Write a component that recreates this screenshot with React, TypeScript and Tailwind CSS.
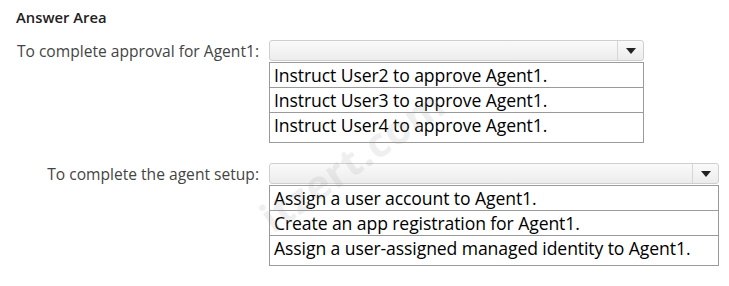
const approvalOptions = [
  'Instruct User2 to approve Agent1.',
  'Instruct User3 to approve Agent1.',
  'Instruct User4 to approve Agent1.',
];

const setupOptions = [
  'Assign a user account to Agent1.',
  'Create an app registration for Agent1.',
  'Assign a user-assigned managed identity to Agent1.',
];

function Dropdown({ width, options }: { width: string; options: string[] }) {
  return (
    <div className={`flex flex-col ${width}`}>
      <div className="flex h-[21px] rounded-[3px] border border-[#cfcfcf] bg-gradient-to-b from-[#fafafa] to-[#ececec]">
        <div className="flex-1" />
        <div className="flex w-[26px] items-center justify-center border-l border-[#d6d6d6]">
          <svg width="10" height="6" viewBox="0 0 10 6">
            <path d="M0 0h10L5 6z" fill="#222" />
          </svg>
        </div>
      </div>
      <div className="mt-px border border-[#9a9a9a] bg-white">
        {options.map((o, i) => (
          <div
            key={o}
            className={`pl-[4px] text-[17.6px] leading-[24px] tracking-[-0.1px] text-black ${
              i < options.length - 1 ? 'h-[25px] border-b border-[#9a9a9a]' : 'h-[29px]'
            }`}
          >
            {o}
          </div>
        ))}
      </div>
    </div>
  );
}

export default function App() {
  return (
    <div className="relative h-[286px] w-[729px] overflow-hidden bg-white font-['Open_Sans',sans-serif]">
      <div className="pl-[16px] pt-[7px] text-[14.8px] font-semibold leading-[20px] text-[#222]">Answer Area</div>

      <div className="mt-[13px] flex">
        <div className="w-[259px] pt-[1px] text-right text-[15.6px] leading-[20px] text-[#444]">
          To complete approval for Agent1:
        </div>
        <div className="ml-[10px]">
          <Dropdown width="w-[375px]" options={approvalOptions} />
        </div>
      </div>

      <div className="mt-[20px] flex">
        <div className="w-[259px] pt-[1px] text-right text-[15.6px] leading-[20px] text-[#444]">
          To complete the agent setup:
        </div>
        <div className="ml-[10px]">
          <Dropdown width="w-[450px]" options={setupOptions} />
        </div>
      </div>

      {/* watermark */}
      <div className="pointer-events-none absolute left-[245px] top-[130px] -rotate-[35deg] text-[40px] font-bold tracking-wide text-[#9a9a9a] opacity-15">
        itzert.com
      </div>
    </div>
  );
}
